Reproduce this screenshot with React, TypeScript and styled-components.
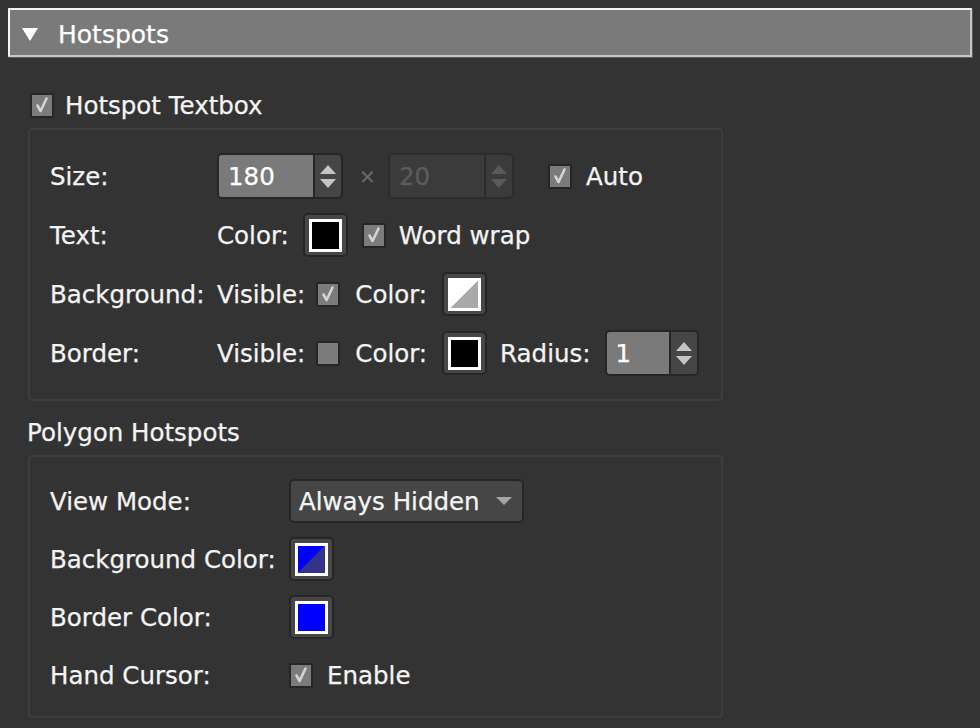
import styled, { createGlobalStyle } from "styled-components";

const GlobalStyle = createGlobalStyle`
  html, body {
    margin: 0;
    padding: 0;
    background: #333333;
  }
  body {
    font-family: "DejaVu Sans", Verdana, sans-serif;
    font-size: 24.5px;
    color: #f4f4f4;
    -webkit-text-stroke: 0.25px currentColor;
  }
`;

const Page = styled.div`
  width: 980px;
  height: 728px;
  overflow: hidden;
  background: #333333;
`;

const Header = styled.div`
  margin: 8px 8px 0;
  height: 49px;
  box-sizing: border-box;
  background: #7a7a7a;
  border-top: 2px solid #f4f4f4;
  border-left: 2px solid #f4f4f4;
  border-right: 2px solid #c6c6c6;
  border-bottom: 2px solid #c6c6c6;
  box-shadow: 1px 1px 0 #5c5c5c;
  display: flex;
  align-items: center;
  gap: 20px;
  padding: 3px 0 0 12px;
`;

const HeaderTitle = styled.span`
  font-size: 25px;
  color: #ffffff;
  line-height: 1;
`;

const Content = styled.div`
  padding: 33px 0 0 28px;
`;

const GroupHeading = styled.div`
  height: 30px;
  display: flex;
  align-items: center;
  gap: 11px;
  padding-left: 2px;
  margin-bottom: 8px;
`;

const SectionTitle = styled.div`
  height: 30px;
  display: flex;
  align-items: center;
  margin: 16px 0 8px -1px;
`;

const Panel = styled.div<{ $labelWidth: number; $pt: number; $pb: number; $gap: number }>`
  width: 695px;
  box-sizing: border-box;
  border: 2px solid #3e3e3e;
  border-radius: 4px;
  padding: ${(p) => p.$pt}px 20px ${(p) => p.$pb}px 20px;
  display: grid;
  grid-template-columns: ${(p) => p.$labelWidth}px 1fr;
  grid-auto-rows: 44px;
  row-gap: ${(p) => p.$gap}px;
  align-items: center;
`;

const Label = styled.span`
  white-space: nowrap;
`;

const Controls = styled.div`
  display: flex;
  align-items: center;
  height: 44px;
`;

const Text = styled.span<{ $ml?: number }>`
  margin-left: ${(p) => p.$ml ?? 0}px;
  white-space: nowrap;
`;

const Times = styled.span<{ $ml?: number }>`
  margin-left: ${(p) => p.$ml ?? 0}px;
  color: #6a6a6a;
  font-size: 20px;
  width: 14px;
  text-align: center;
`;

const Box = styled.span<{ $ml?: number }>`
  margin-left: ${(p) => p.$ml ?? 0}px;
  width: 24px;
  height: 25px;
  box-sizing: border-box;
  flex: none;
  background: #7b7b7b;
  border: 2px solid #262626;
  border-radius: 2px;
  display: flex;
  align-items: center;
  justify-content: center;
`;

function Checkbox({ checked, ml }: { checked: boolean; ml?: number }) {
  return (
    <Box $ml={ml}>
      {checked && (
        <svg width="20" height="20" viewBox="0 0 20 20">
          <path
            d="M5.5 10.5 L8.6 16 L14.5 3.5"
            fill="none"
            stroke="#d4d4d4"
            strokeWidth="2.6"
            strokeLinejoin="round"
            strokeLinecap="round"
          />
        </svg>
      )}
    </Box>
  );
}

const SpinWrap = styled.div<{ $w: number; $ml?: number; $disabled?: boolean }>`
  margin-left: ${(p) => p.$ml ?? 0}px;
  width: ${(p) => p.$w}px;
  height: 46px;
  box-sizing: border-box;
  flex: none;
  display: flex;
  border: 2px solid ${(p) => (p.$disabled ? "#2c2c2c" : "#262626")};
  border-radius: 5px;
  overflow: hidden;
  background: ${(p) => (p.$disabled ? "#3b3b3b" : "#454545")};
`;

const SpinField = styled.div<{ $disabled?: boolean }>`
  flex: 1;
  display: flex;
  align-items: center;
  padding-left: 9px;
  background: ${(p) => (p.$disabled ? "#3b3b3b" : "#7a7a7a")};
  color: ${(p) => (p.$disabled ? "#5c5c5c" : "#ffffff")};
  border-right: 2px solid ${(p) => (p.$disabled ? "#2c2c2c" : "#262626")};
`;

const SpinButtons = styled.div`
  width: 26px;
  display: flex;
  flex-direction: column;
  align-items: center;
  justify-content: center;
  gap: 5px;
`;

function Spinner({ value, width, ml, disabled }: { value: string; width: number; ml?: number; disabled?: boolean }) {
  const c = disabled ? "#5a5a5a" : "#c4c4c4";
  return (
    <SpinWrap $w={width} $ml={ml} $disabled={disabled}>
      <SpinField $disabled={disabled}>{value}</SpinField>
      <SpinButtons>
        <svg width="16" height="9" viewBox="0 0 16 9">
          <path d="M8 0 L16 9 L0 9 Z" fill={c} />
        </svg>
        <svg width="16" height="9" viewBox="0 0 16 9">
          <path d="M0 0 L16 0 L8 9 Z" fill={c} />
        </svg>
      </SpinButtons>
    </SpinWrap>
  );
}

const SwatchButton = styled.div<{ $ml?: number }>`
  margin-left: ${(p) => p.$ml ?? 0}px;
  width: 45px;
  height: 44px;
  box-sizing: border-box;
  flex: none;
  background: #474747;
  border: 2px solid #262626;
  border-radius: 5px;
  display: flex;
  align-items: center;
  justify-content: center;
`;

const SwatchColor = styled.div<{ $a: string; $b: string }>`
  width: 33px;
  height: 33px;
  box-sizing: border-box;
  border: 3px solid #ffffff;
  background: linear-gradient(to bottom right, ${(p) => p.$a} 50%, ${(p) => p.$b} 50%);
`;

function Swatch({ a, b, ml }: { a: string; b?: string; ml?: number }) {
  return (
    <SwatchButton $ml={ml}>
      <SwatchColor $a={a} $b={b ?? a} />
    </SwatchButton>
  );
}

const Select = styled.div`
  width: 235px;
  height: 44px;
  box-sizing: border-box;
  background: #464646;
  border: 2px solid #262626;
  border-radius: 5px;
  display: flex;
  align-items: center;
  justify-content: space-between;
  padding: 0 10px 0 8px;
`;

export default function App() {
  return (
    <Page>
      <GlobalStyle />
      <Header>
        <svg width="16" height="13" viewBox="0 0 16 13">
          <path d="M0 0 L16 0 L8 13 Z" fill="#ffffff" />
        </svg>
        <HeaderTitle>Hotspots</HeaderTitle>
      </Header>

      <Content>
        <GroupHeading>
          <Checkbox checked />
          <span>Hotspot Textbox</span>
        </GroupHeading>

        <Panel $labelWidth={167} $pt={24} $pb={24} $gap={15}>
          <Label>Size:</Label>
          <Controls>
            <Spinner value="180" width={126} />
            <Times $ml={16}>×</Times>
            <Spinner value="20" width={126} ml={15} disabled />
            <Checkbox checked ml={34} />
            <Text $ml={14}>Auto</Text>
          </Controls>

          <Label>Text:</Label>
          <Controls>
            <Text>Color:</Text>
            <Swatch a="#000000" ml={14} />
            <Checkbox checked ml={14} />
            <Text $ml={13}>Word wrap</Text>
          </Controls>

          <Label>Background:</Label>
          <Controls>
            <Text>Visible:</Text>
            <Checkbox checked ml={11} />
            <Text $ml={15}>Color:</Text>
            <Swatch a="#ffffff" b="#a9a9a9" ml={15} />
          </Controls>

          <Label>Border:</Label>
          <Controls>
            <Text>Visible:</Text>
            <Checkbox checked={false} ml={11} />
            <Text $ml={15}>Color:</Text>
            <Swatch a="#000000" ml={15} />
            <Text $ml={13}>Radius:</Text>
            <Spinner value="1" width={94} ml={14} />
          </Controls>
        </Panel>

        <SectionTitle>Polygon Hotspots</SectionTitle>

        <Panel $labelWidth={239} $pt={22} $pb={19} $gap={14}>
          <Label>View Mode:</Label>
          <Controls>
            <Select>
              <span>Always Hidden</span>
              <svg width="16" height="8" viewBox="0 0 16 8">
                <path d="M0 0 L16 0 L8 8 Z" fill="#a4a4a4" />
              </svg>
            </Select>
          </Controls>

          <Label>Background Color:</Label>
          <Controls>
            <Swatch a="#0000ff" b="#33338a" />
          </Controls>

          <Label>Border Color:</Label>
          <Controls>
            <Swatch a="#0000ff" />
          </Controls>

          <Label>Hand Cursor:</Label>
          <Controls>
            <Checkbox checked />
            <Text $ml={14}>Enable</Text>
          </Controls>
        </Panel>
      </Content>
    </Page>
  );
}
